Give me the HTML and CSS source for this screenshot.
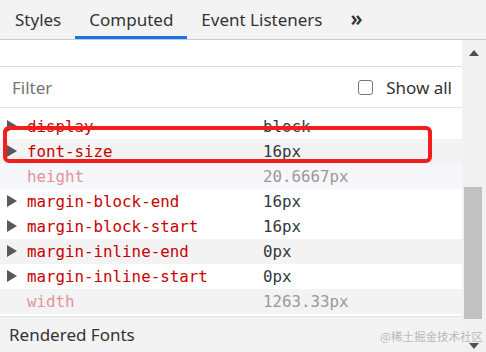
FILE: index.html
```html
<!DOCTYPE html>
<html lang="en">
<head>
  <meta charset="UTF-8" />
  <title>Computed</title>
  <link rel="stylesheet" href="styles.css">
</head>
<body>
  <nav class="tabs">
    <div class="tab">Styles</div>
    <div class="tab active">Computed</div>
    <div class="tab">Event Listeners</div>
    <div class="tab more">&raquo;</div>
  </nav>

  <div class="main">
    <div class="panel">
      <div class="blank"></div>
      <div class="filter">
        <span class="filter-text">Filter</span>
        <label class="show-all"><span class="box"></span>Show all</label>
      </div>
      <div class="gap"></div>
      <div class="list">
        <div class="rows">
          <div class="row"><span class="arrow"></span><span class="name">display</span><span class="value">block</span></div>
          <div class="row gray"><span class="arrow"></span><span class="name">font-size</span><span class="value">16px</span></div>
          <div class="row tint dim"><span class="arrow none"></span><span class="name">height</span><span class="value">20.6667px</span></div>
          <div class="row"><span class="arrow"></span><span class="name">margin-block-end</span><span class="value">16px</span></div>
          <div class="row"><span class="arrow"></span><span class="name">margin-block-start</span><span class="value">16px</span></div>
          <div class="row gray"><span class="arrow"></span><span class="name">margin-inline-end</span><span class="value">0px</span></div>
          <div class="row"><span class="arrow"></span><span class="name">margin-inline-start</span><span class="value">0px</span></div>
          <div class="row gray dim"><span class="arrow none"></span><span class="name">width</span><span class="value">1263.33px</span></div>
        </div>
      </div>
      <div class="fonts">Rendered Fonts</div>
      <div class="highlight"></div>
    </div>
    <div class="scrollbar">
      <span class="up"></span>
      <span class="thumb"></span>
      <span class="down"></span>
    </div>
  </div>
  <div class="mark">@稀土掘金技术社区</div>
</body>
</html>
```

FILE: styles.css
```css
* { box-sizing: border-box; margin: 0; padding: 0; }
body {
  position: relative;
  font-family: 'Noto Sans', sans-serif;
  background: #fff;
  color: #333;
  width: 486px;
  height: 352px;
  overflow: hidden;
}

.tabs {
  display: flex;
  height: 40px;
  background: #f3f3f3;
  border-bottom: 1px solid #cbcbcb;
}
.tab {
  padding: 3px 14px 0;
  font-size: 17px;
  line-height: 33px;
  border-bottom: 3px solid transparent;
}
.tab:first-child { padding-left: 15px; }
.tab.active { border-bottom-color: #1a73e8; }
.tab.more { font-size: 21px; font-weight: 600; line-height: 31px; }

.main {
  display: flex;
  height: 312px;
}
.panel {
  position: relative;
  flex: 1;
  display: flex;
  flex-direction: column;
}
.blank {
  height: 27px;
  border-bottom: 1px solid #ddd;
}
.filter {
  display: flex;
  align-items: center;
  justify-content: space-between;
  height: 41px;
  padding: 0 10px 0 12px;
  border-bottom: 1px solid #e4e4e4;
  font-size: 17px;
}
.filter-text { color: #757575; }
.show-all { display: flex; align-items: center; gap: 13px; }
.box {
  width: 15px;
  height: 15px;
  border: 1px solid #767676;
  border-radius: 3px;
}
.gap { height: 9px; }

.list {
  height: 200px;
  overflow: hidden;
  border-bottom: 1px solid #e0e0e0;
}
.rows { margin-top: -3.5px; }
.row {
  display: flex;
  align-items: center;
  height: 25px;
  font-family: 'DejaVu Sans Mono', monospace;
  font-size: 15.8px;
}
.row.gray { background: #f3f3f3; }
.row.tint { background: #f5f7fa; }
.arrow {
  width: 0;
  height: 0;
  margin: 0 10px 0 7px;
  border-top: 6px solid transparent;
  border-bottom: 6px solid transparent;
  border-left: 10px solid #595959;
}
.arrow.none { border-left-color: transparent; }
.name { color: #c80000; width: 236px; }
.value { color: #303942; }
.dim .name { color: #e4929b; }
.dim .value { color: #9a9a9a; }

.fonts {
  flex: 1;
  background: #f3f3f3;
  padding: 6px 9px 0;
  font-size: 17px;
}

.highlight {
  position: absolute;
  left: 3px;
  top: 86px;
  width: 429px;
  height: 37px;
  border: 4px solid #f21d1d;
  border-radius: 6px;
}
.mark {
  position: absolute;
  right: 3px;
  top: 328px;
  font-size: 11.5px;
  color: #b9b9b9;
  font-family: 'Noto Sans CJK SC', sans-serif;
}

.scrollbar {
  position: relative;
  width: 24px;
  background: #f1f1f1;
}
.up, .down {
  position: absolute;
  left: 7px;
  width: 0;
  height: 0;
  border-left: 5.5px solid transparent;
  border-right: 5.5px solid transparent;
}
.up { top: 10px; border-bottom: 6px solid #505050; }
.down { bottom: 3px; border-top: 6px solid #505050; }
.thumb {
  position: absolute;
  left: 2px;
  top: 147px;
  width: 18px;
  height: 132px;
  background: #c1c1c1;
}
```
